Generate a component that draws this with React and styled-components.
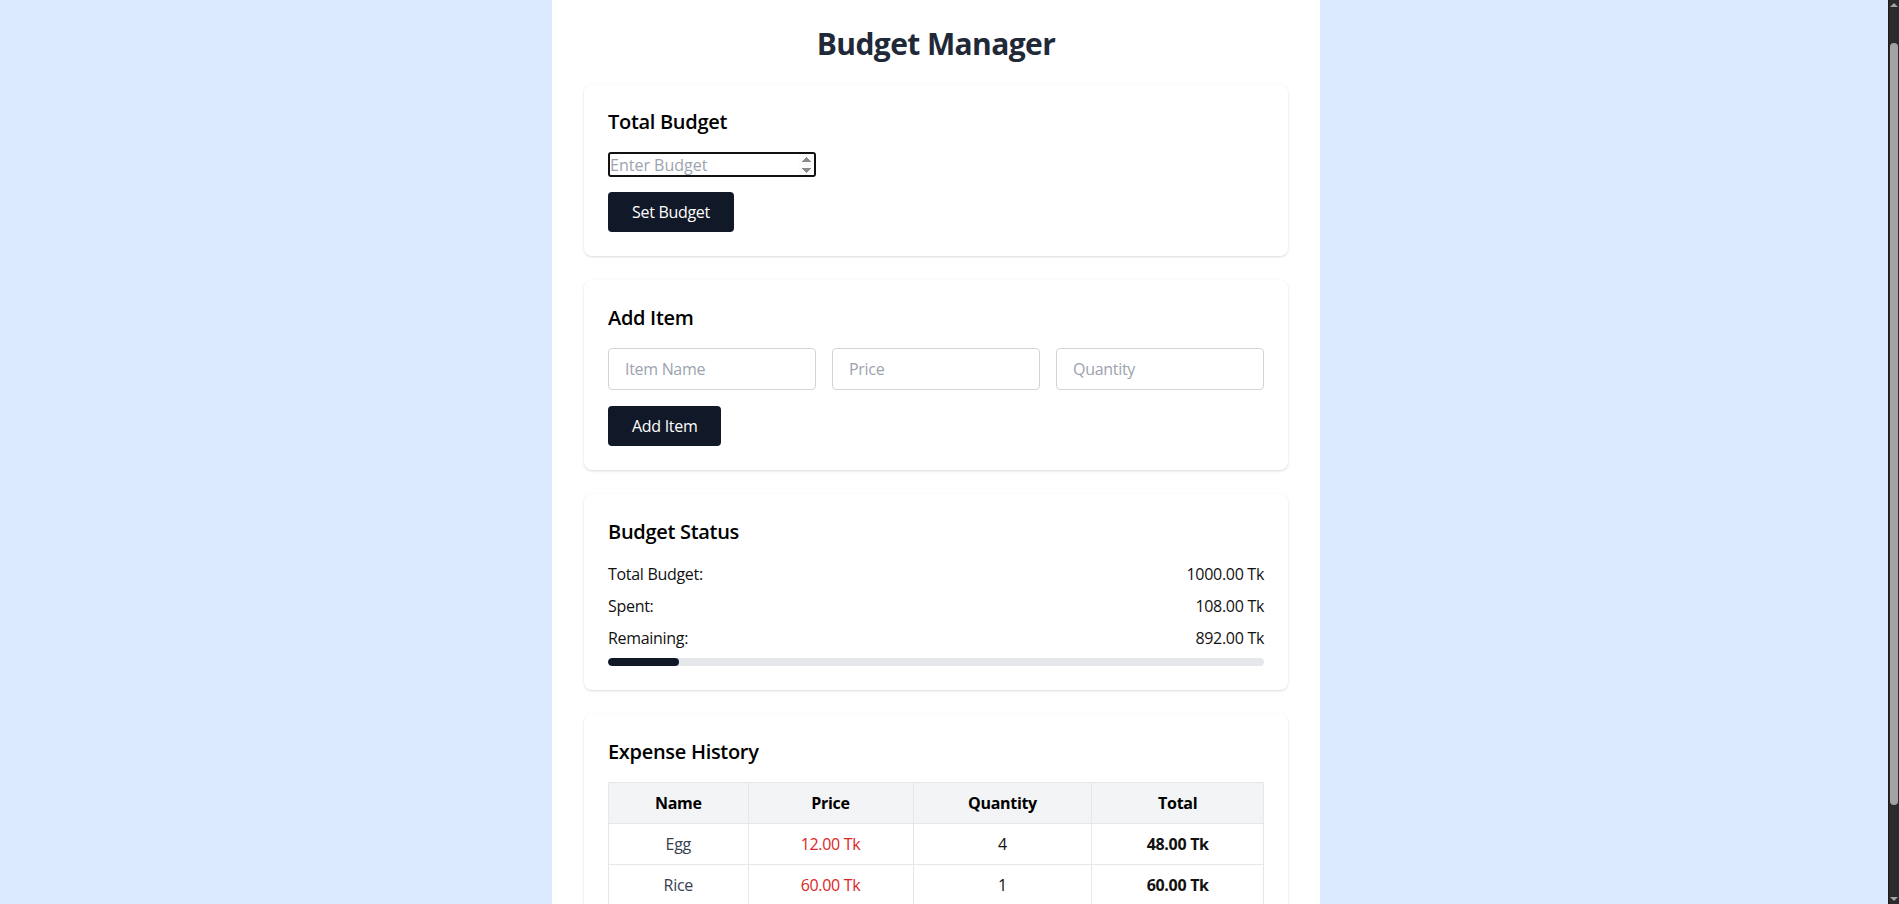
import styled, { createGlobalStyle } from "styled-components";

const GlobalStyle = createGlobalStyle`
  html, body {
    margin: 0;
    height: 100%;
    overflow: hidden;
  }
  body {
    font-family: "Open Sans", "Noto Sans", sans-serif;
    letter-spacing: -0.3px;
    background: #dbeafe;
    color: #111827;
  }
  #root {
    height: 100%;
  }
`;

const Viewport = styled.div`
  display: flex;
  height: 100vh;
`;

const Page = styled.div`
  flex: 1;
  background: #dbeafe;
  padding-right: 16px;
  overflow: hidden;
`;

const Panel = styled.main`
  max-width: 768px;
  min-height: 100%;
  margin: 0 auto;
  box-sizing: border-box;
  padding: 26px 32px 24px;
  background: #fff;
`;

const Title = styled.h1`
  margin: 0 0 22px;
  font-size: 30px;
  line-height: 36px;
  font-weight: 700;
  letter-spacing: -0.6px;
  text-align: center;
  color: #1f2937;
`;

const Stack = styled.div`
  display: flex;
  flex-direction: column;
  gap: 24px;
`;

const Card = styled.section`
  background: #fff;
  border-radius: 8px;
  padding: 24px;
  box-shadow: 0 1px 3px rgba(0, 0, 0, 0.1), 0 1px 2px rgba(0, 0, 0, 0.05);
`;

const CardTitle = styled.h2`
  margin: 0 0 16px;
  font-size: 20px;
  line-height: 28px;
  font-weight: 600;
  color: #000;
`;

const BudgetInput = styled.input`
  display: block;
  width: 208px;
  height: 25px;
  box-sizing: border-box;
  margin: 0 0 15px;
  padding: 0;
  border: 2px solid #111;
  border-radius: 3px;
  font: inherit;
  font-size: 16px;
  outline: none;

  &::placeholder {
    color: #9ca3af;
  }
  &::-webkit-inner-spin-button {
    opacity: 1;
  }
`;

const Button = styled.button`
  display: inline-block;
  padding: 8px 24px;
  border: none;
  border-radius: 4px;
  background: #111827;
  color: #fff;
  font-family: inherit;
  font-size: 16px;
  line-height: 24px;
  letter-spacing: inherit;
  cursor: pointer;
`;

const FieldGrid = styled.div`
  display: grid;
  grid-template-columns: repeat(3, 1fr);
  gap: 16px;
  margin-bottom: 16px;
`;

const Field = styled.input`
  min-width: 0;
  padding: 8px 16px;
  border: 1px solid #d1d5db;
  border-radius: 4px;
  font-family: inherit;
  font-size: 16px;
  line-height: 24px;
  letter-spacing: inherit;
  outline: none;

  &::placeholder {
    color: #9ca3af;
  }
`;

const StatusList = styled.div`
  display: flex;
  flex-direction: column;
  gap: 8px;
`;

const StatusRow = styled.div`
  display: flex;
  justify-content: space-between;
  font-size: 16px;
  line-height: 24px;
  color: #111;
`;

const Track = styled.div`
  height: 8px;
  margin-top: 8px;
  border-radius: 9999px;
  background: #e5e7eb;
  overflow: hidden;
`;

const Fill = styled.div`
  height: 100%;
  border-radius: 9999px;
  background: #111827;
`;

const Table = styled.table`
  width: 100%;
  border-collapse: collapse;
  font-size: 16px;
  line-height: 24px;
`;

const Th = styled.th`
  width: ${(p) => p.$w};
  padding: 8px;
  border: 1px solid #e5e7eb;
  background: #f3f4f6;
  font-weight: 700;
  color: #000;
  text-align: center;
`;

const Td = styled.td`
  padding: 8px;
  border: 1px solid #e5e7eb;
  text-align: center;
  color: ${(p) => p.$color || "#111"};
  font-weight: ${(p) => (p.$bold ? 700 : 400)};
`;

const Scrollbar = styled.div`
  width: 11px;
  flex-shrink: 0;
  display: flex;
  flex-direction: column;
  align-items: center;
  background: #2b2b2b;
  border-left: 1px solid #1a1a1a;
  box-sizing: border-box;
`;

const Arrow = styled.div`
  width: 0;
  height: 0;
  margin: ${(p) => (p.$down ? "auto 0 3px" : "3px 0 0")};
  border-left: 4px solid transparent;
  border-right: 4px solid transparent;
  ${(p) =>
    p.$down ? "border-top: 4px solid #a3a3a3;" : "border-bottom: 4px solid #a3a3a3;"}
`;

const Thumb = styled.div`
  width: 8px;
  height: 762px;
  margin-top: 36px;
  border-radius: 4px;
  background: #a3a3a3;
`;

const budget = 1000;
const items = [
  { name: "Egg", price: 12, qty: 4 },
  { name: "Rice", price: 60, qty: 1 },
];

const tk = (n) => `${n.toFixed(2)} Tk`;

export default function App() {
  const spent = items.reduce((s, i) => s + i.price * i.qty, 0);
  const remaining = budget - spent;

  return (
    <Viewport>
      <GlobalStyle />
      <Page>
        <Panel>
          <Title>Budget Manager</Title>
          <Stack>
            <Card>
              <CardTitle>Total Budget</CardTitle>
              <BudgetInput type="number" placeholder="Enter Budget" />
              <Button>Set Budget</Button>
            </Card>

            <Card>
              <CardTitle>Add Item</CardTitle>
              <FieldGrid>
                <Field type="text" placeholder="Item Name" />
                <Field type="text" placeholder="Price" />
                <Field type="text" placeholder="Quantity" />
              </FieldGrid>
              <Button>Add Item</Button>
            </Card>

            <Card>
              <CardTitle>Budget Status</CardTitle>
              <StatusList>
                <StatusRow>
                  <span>Total Budget:</span>
                  <span>{tk(budget)}</span>
                </StatusRow>
                <StatusRow>
                  <span>Spent:</span>
                  <span>{tk(spent)}</span>
                </StatusRow>
                <StatusRow>
                  <span>Remaining:</span>
                  <span>{tk(remaining)}</span>
                </StatusRow>
              </StatusList>
              <Track>
                <Fill style={{ width: `${(spent / budget) * 100}%` }} />
              </Track>
            </Card>

            <Card>
              <CardTitle>Expense History</CardTitle>
              <Table>
                <thead>
                  <tr>
                    <Th $w="21.3%">Name</Th>
                    <Th $w="25.2%">Price</Th>
                    <Th $w="27.3%">Quantity</Th>
                    <Th $w="26.2%">Total</Th>
                  </tr>
                </thead>
                <tbody>
                  {items.map((i) => (
                    <tr key={i.name}>
                      <Td $color="#374151">{i.name}</Td>
                      <Td $color="#dc2626">{tk(i.price)}</Td>
                      <Td>{i.qty}</Td>
                      <Td $bold>{tk(i.price * i.qty)}</Td>
                    </tr>
                  ))}
                </tbody>
              </Table>
            </Card>
          </Stack>
        </Panel>
      </Page>
      <Scrollbar>
        <Arrow />
        <Thumb />
        <Arrow $down />
      </Scrollbar>
    </Viewport>
  );
}
